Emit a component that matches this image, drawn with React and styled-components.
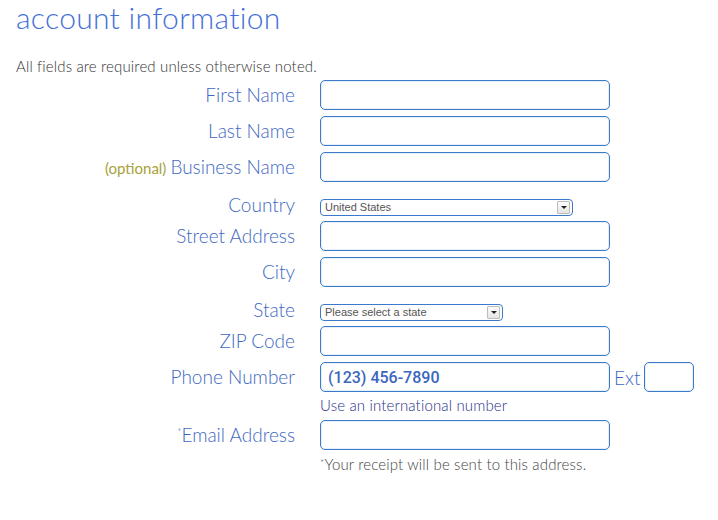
import React from "react";
import styled, { createGlobalStyle } from "styled-components";

const Global = createGlobalStyle`
  html, body { margin: 0; padding: 0; background: #fff; }
  body { font-family: Lato, "Open Sans", sans-serif; }
`;

const Page = styled.div`
  padding: 0 16px;
  width: 718px;
  box-sizing: border-box;
`;

const Title = styled.h1`
  margin: 0;
  font-family: Lato, sans-serif;
  font-weight: 300;
  font-size: 30px;
  line-height: 34px;
  color: #4470d8;
  letter-spacing: 0.3px;
`;

const Intro = styled.p`
  margin: 23px 0 0;
  font-size: 15px;
  line-height: 18px;
  font-weight: 300;
  letter-spacing: 0.15px;
  color: #333;
`;

const Row = styled.div`
  display: grid;
  grid-template-columns: 279px auto 1fr;
  column-gap: 25px;
  align-items: ${(p) => (p.$end ? "end" : "center")};
  margin-top: ${(p) => p.$mt}px;
`;

const Label = styled.label`
  text-align: right;
  font-size: 19px;
  line-height: 22px;
  color: #3e68c2;
  font-weight: 300;
  white-space: nowrap;
`;

const Optional = styled.span`
  font-size: 15px;
  font-weight: 400;
  color: #a7a23a;
  margin-right: 4px;
`;

const Star = styled.sup`
  font-size: 10px;
  vertical-align: top;
  line-height: 14px;
`;

const FieldLine = styled.div`
  display: flex;
  align-items: center;
  gap: 3px;
`;

const Input = styled.input`
  box-sizing: border-box;
  width: ${(p) => p.$w || 290}px;
  height: 30px;
  border: 1px solid #3b7acb;
  border-radius: 5px;
  background: #fff;
  padding: 0 7px;
  font-family: Roboto, "Liberation Sans", Arial, sans-serif;
  font-weight: 500;
  font-size: 16px;
  color: #3a66c0;
  outline: none;
  box-shadow: inset 0 0 0 1px rgba(59, 122, 203, 0.12);
`;

const Ext = styled.span`
  font-size: 19px;
  font-weight: 300;
  color: #3e68c2;
  margin: 0 1px 0 1px;
`;

const SelectBox = styled.div`
  position: relative;
  box-sizing: border-box;
  width: ${(p) => p.$w}px;
  height: 17px;
  border: 1px solid #3b7acb;
  border-radius: 4px;
  background: #fff;
  font-family: "Liberation Sans", Arial, sans-serif;
  font-size: 11px;
  line-height: 15px;
  color: #555;
  padding-left: 4px;
`;

const Arrow = styled.span`
  position: absolute;
  right: 2px;
  top: 1px;
  width: 11px;
  height: 11px;
  background: linear-gradient(#fdfdfd, #e4e4e4);
  border: 1px solid #bdbdbd;
  border-radius: 1px;
  display: flex;
  align-items: center;
  justify-content: center;
  &::after {
    content: "";
    border-left: 3px solid transparent;
    border-right: 3px solid transparent;
    border-top: 3px solid #222;
  }
`;

const Hint = styled.div`
  grid-column: 2 / 4;
  font-size: 15px;
  line-height: 18px;
  font-weight: 300;
  letter-spacing: 0.15px;
  color: ${(p) => p.$color};
`;

const Spacer = styled.div``;

function TextRow({ label, mt, optional, star, children }) {
  return (
    <Row $mt={mt}>
      <Label>
        {optional && <Optional>(optional)</Optional>}
        {star && <Star>*</Star>}
        {label}
      </Label>
      <FieldLine>{children || <Input />}</FieldLine>
    </Row>
  );
}

function SelectRow({ label, mt, width, value }) {
  return (
    <Row $mt={mt} $end>
      <Label>{label}</Label>
      <SelectBox $w={width} role="combobox">
        {value}
        <Arrow />
      </SelectBox>
    </Row>
  );
}

export default function App() {
  return (
    <Page>
      <Global />
      <Title>account information</Title>
      <Intro>All fields are required unless otherwise noted.</Intro>
      <TextRow label="First Name" mt={5} />
      <TextRow label="Last Name" mt={6} />
      <TextRow label="Business Name" mt={6} optional />
      <SelectRow label="Country" mt={12} width={253} value="United States" />
      <TextRow label="Street Address" mt={5} />
      <TextRow label="City" mt={6} />
      <SelectRow label="State" mt={12} width={183} value="Please select a state" />
      <TextRow label="ZIP Code" mt={5} />
      <TextRow label="Phone Number" mt={6}>
        <Input defaultValue="(123) 456-7890" />
        <Ext>Ext</Ext>
        <Input $w={50} />
      </TextRow>
      <Row $mt={4}>
        <Spacer />
        <Hint $color="#1f2f86">Use an international number</Hint>
      </Row>
      <TextRow label="Email Address" mt={6} star />
      <Row $mt={5}>
        <Spacer />
        <Hint $color="#444">
          <Star>*</Star>Your receipt will be sent to this address.
        </Hint>
      </Row>
    </Page>
  );
}
